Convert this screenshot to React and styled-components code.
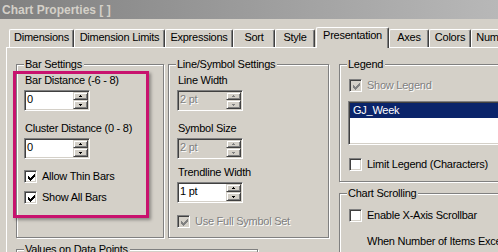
import React from "react";
import styled, { createGlobalStyle, css } from "styled-components";

const GlobalStyle = createGlobalStyle`
  html, body { margin: 0; padding: 0; background: #d4d0c8; overflow: hidden; }
  body { font-family: "Liberation Sans", Arial, sans-serif; font-size: 11px; }
`;

const Window = styled.div`
  position: relative;
  width: 498px;
  height: 252px;
  overflow: hidden;
  background: #d4d0c8;
  color: #000;
  font-family: "Liberation Sans", Arial, sans-serif;
  font-size: 11px;
  letter-spacing: -0.25px;
`;

const TitleBar = styled.div`
  height: 19px;
  box-sizing: border-box;
  padding: 1px 0 0 2px;
  line-height: 18px;
  background: linear-gradient(90deg, #808080, #b8b8b8);
  color: #d4d0c8;
  font-weight: bold;
  font-size: 12px;
  letter-spacing: 0;
  white-space: nowrap;
`;

const Body = styled.div`
  padding: 8px 0 0 6px;
`;

const TabStrip = styled.div`
  display: flex;
  align-items: flex-end;
  height: 21px;
  padding-left: 3px;
`;

const Tab = styled.div`
  flex: none;
  width: ${(p) => p.$w}px;
  height: 18px;
  margin-bottom: 1px;
  box-sizing: border-box;
  border-top: 1px solid #fff;
  border-left: 1px solid #fff;
  border-right: 1px solid #404040;
  box-shadow: inset -1px 0 0 #808080;
  border-radius: 2px 2px 0 0;
  background: #d4d0c8;
  text-align: center;
  padding-top: 1px;
  line-height: 13px;
  white-space: nowrap;
  overflow: hidden;
  ${(p) =>
    p.$active &&
    css`
      position: relative;
      z-index: 2;
      height: 21px;
      margin-bottom: 0;
      margin-left: ${p.$ml || 0}px;
      padding-top: 1px;
    `}
`;

const TabPanel = styled.div`
  margin-top: -1px;
  width: 540px;
  height: 300px;
  box-sizing: border-box;
  border-top: 1px solid #fff;
  border-left: 1px solid #fff;
  padding: 16px 0 0 9px;
  display: flex;
  align-items: flex-start;
`;

const LeftBlock = styled.div`
  display: flex;
  flex-direction: column;
`;

const TopRow = styled.div`
  display: flex;
  gap: 4px;
`;

const RightBlock = styled.div`
  display: flex;
  flex-direction: column;
  margin-left: 10px;
`;

const GroupBox = styled.div`
  position: relative;
  box-sizing: border-box;
  width: ${(p) => p.$w}px;
  height: ${(p) => p.$h}px;
  margin-top: ${(p) => p.$mt || 0}px;
  border: 1px solid #808080;
  box-shadow: inset 1px 1px 0 #fff, 1px 1px 0 #fff;
  padding: 0 0 0 ${(p) => p.$pl || 8}px;
  display: flex;
  flex-direction: column;
  align-items: flex-start;
`;

const GroupLabel = styled.span`
  position: absolute;
  top: -7px;
  left: 7px;
  padding: 0 2px 0 1px;
  line-height: 13px;
  background: #d4d0c8;
  white-space: nowrap;
`;

const disabledText = css`
  color: #808080;
  text-shadow: 1px 1px 0 #fff;
`;

const FieldLabel = styled.div`
  line-height: 13px;
  padding-left: 1px;
  margin-top: ${(p) => p.$mt || 0}px;
  margin-bottom: 3px;
  white-space: nowrap;
`;

const sunken = css`
  box-sizing: border-box;
  border: 1px solid;
  border-color: #808080 #fff #fff #808080;
  box-shadow: inset 1px 1px 0 #404040, inset -1px -1px 0 #d4d0c8;
`;

const SpinFrame = styled.div`
  ${sunken};
  width: 66px;
  height: 21px;
  padding: 1px;
  display: flex;
  background: ${(p) => (p.$disabled ? "#d4d0c8" : "#fff")};
`;

const SpinText = styled.span`
  flex: 1;
  line-height: 13px;
  padding: 1px 0 0 1px;
  white-space: nowrap;
  ${(p) => p.$disabled && disabledText};
`;

const SpinButtons = styled.div`
  width: 15px;
  display: flex;
  flex-direction: column;
`;

const SpinButton = styled.div`
  box-sizing: border-box;
  height: ${(p) => p.$h}px;
  border: 1px solid;
  border-color: #d4d0c8 #404040 #404040 #d4d0c8;
  box-shadow: inset 1px 1px 0 #fff, inset -1px -1px 0 #808080;
  background: #d4d0c8;
  display: flex;
  align-items: center;
  justify-content: center;
`;

const Arrow = ({ down, color }) => (
  <svg width="3" height="2" viewBox="0 0 3 2" shapeRendering="crispEdges" style={{ display: "block" }}>
    {down ? (
      <>
        <rect x="0" y="0" width="3" height="1" fill={color} />
        <rect x="1" y="1" width="1" height="1" fill={color} />
      </>
    ) : (
      <>
        <rect x="1" y="0" width="1" height="1" fill={color} />
        <rect x="0" y="1" width="3" height="1" fill={color} />
      </>
    )}
  </svg>
);

const SpinBox = ({ value, disabled }) => {
  const c = disabled ? "#808080" : "#000";
  return (
    <SpinFrame $disabled={disabled}>
      <SpinText $disabled={disabled}>{value}</SpinText>
      <SpinButtons>
        <SpinButton $h={8}>
          <Arrow color={c} />
        </SpinButton>
        <SpinButton $h={9}>
          <Arrow down color={c} />
        </SpinButton>
      </SpinButtons>
    </SpinFrame>
  );
};

const CheckRow = styled.div`
  display: flex;
  align-items: center;
  gap: 5px;
  line-height: 13px;
  margin-top: ${(p) => p.$mt || 0}px;
  white-space: nowrap;
`;

const CheckBoxBox = styled.div`
  ${sunken};
  flex: none;
  width: 13px;
  height: 13px;
  padding: 2px;
  background: ${(p) => (p.$disabled ? "#d4d0c8" : "#fff")};
`;

const CheckText = styled.span`
  ${(p) => p.$disabled && disabledText};
`;

const checkRows = [[6], [5, 6], [0, 4, 5, 6], [0, 1, 3, 4, 5], [0, 1, 2, 3, 4], [1, 2, 3], [2]];

const CheckMark = ({ color }) => (
  <svg width="7" height="7" viewBox="0 0 7 7" shapeRendering="crispEdges" style={{ display: "block", margin: "1px 0 0 1px" }}>
    {checkRows.map((xs, y) => xs.map((x) => <rect key={`${x}-${y}`} x={x} y={y} width="1" height="1" fill={color} />))}
  </svg>
);

const CheckBox = ({ label, checked, disabled, mt }) => (
  <CheckRow $mt={mt}>
    <CheckBoxBox $disabled={disabled}>{checked && <CheckMark color={disabled ? "#808080" : "#000"} />}</CheckBoxBox>
    <CheckText $disabled={disabled}>{label}</CheckText>
  </CheckRow>
);

const ListBox = styled.div`
  ${sunken};
  width: 170px;
  height: 44px;
  margin: ${(p) => p.$mt}px 0 0 -1px;
  padding: 1px;
  background: #fff;
`;

const ListItem = styled.div`
  height: 15px;
  line-height: 15px;
  padding-left: 3px;
  background: ${(p) => (p.$selected ? "#0a246a" : "transparent")};
  color: ${(p) => (p.$selected ? "#fff" : "#000")};
`;

const PlainText = styled.div`
  margin: ${(p) => p.$mt}px 0 0 ${(p) => p.$ml}px;
  line-height: 13px;
  white-space: nowrap;
`;

const Highlight = styled.div`
  position: absolute;
  left: 13px;
  top: 71px;
  width: 136px;
  height: 147px;
  box-sizing: border-box;
  border: 3px solid #c8126e;
  box-shadow: 2px 2px 3px rgba(0, 0, 0, 0.35);
  pointer-events: none;
`;

const tabs = [
  { label: "Dimensions", w: 65 },
  { label: "Dimension Limits", w: 91 },
  { label: "Expressions", w: 68 },
  { label: "Sort", w: 42 },
  { label: "Style", w: 40 },
  { label: "Presentation", w: 73, active: true, ml: 1 },
  { label: "Axes", w: 40 },
  { label: "Colors", w: 42 },
  { label: "Number", w: 48 },
];

export default function App() {
  return (
    <>
      <GlobalStyle />
      <Window>
        <TitleBar>Chart Properties [ ]</TitleBar>
        <Body>
          <TabStrip>
            {tabs.map((t) => (
              <Tab key={t.label} $w={t.w} $active={t.active} $ml={t.ml}>
                {t.label}
              </Tab>
            ))}
          </TabStrip>
          <TabPanel>
            <LeftBlock>
              <TopRow>
                <GroupBox $w={148} $h={174} $pl={7}>
                  <GroupLabel>Bar Settings</GroupLabel>
                  <FieldLabel $mt={9}>Bar Distance (-6 - 8)</FieldLabel>
                  <SpinBox value="0" />
                  <FieldLabel $mt={11}>Cluster Distance (0 - 8)</FieldLabel>
                  <SpinBox value="0" />
                  <CheckBox label="Allow Thin Bars" checked mt={11} />
                  <CheckBox label="Show All Bars" checked mt={8} />
                </GroupBox>
                <GroupBox $w={161} $h={174} $pl={8}>
                  <GroupLabel>Line/Symbol Settings</GroupLabel>
                  <FieldLabel $mt={9}>Line Width</FieldLabel>
                  <SpinBox value="2 pt" disabled />
                  <FieldLabel $mt={11}>Symbol Size</FieldLabel>
                  <SpinBox value="2 pt" disabled />
                  <FieldLabel $mt={7}>Trendline Width</FieldLabel>
                  <SpinBox value="1 pt" />
                  <CheckBox label="Use Full Symbol Set" checked disabled mt={12} />
                </GroupBox>
              </TopRow>
              <GroupBox $w={242} $h={40} $mt={11}>
                <GroupLabel>Values on Data Points</GroupLabel>
              </GroupBox>
            </LeftBlock>
            <RightBlock>
              <GroupBox $w={200} $h={118} $pl={9}>
                <GroupLabel>Legend</GroupLabel>
                <CheckBox label="Show Legend" checked disabled mt={14} />
                <ListBox $mt={9}>
                  <ListItem $selected>GJ_Week</ListItem>
                </ListBox>
                <CheckBox label="Limit Legend (Characters)" mt={13} />
              </GroupBox>
              <GroupBox $w={200} $h={80} $mt={11} $pl={9}>
                <GroupLabel>Chart Scrolling</GroupLabel>
                <CheckBox label="Enable X-Axis Scrollbar" mt={15} />
                <PlainText $mt={13} $ml={18}>When Number of Items Exceeds</PlainText>
              </GroupBox>
            </RightBlock>
          </TabPanel>
        </Body>
        <Highlight />
      </Window>
    </>
  );
}
